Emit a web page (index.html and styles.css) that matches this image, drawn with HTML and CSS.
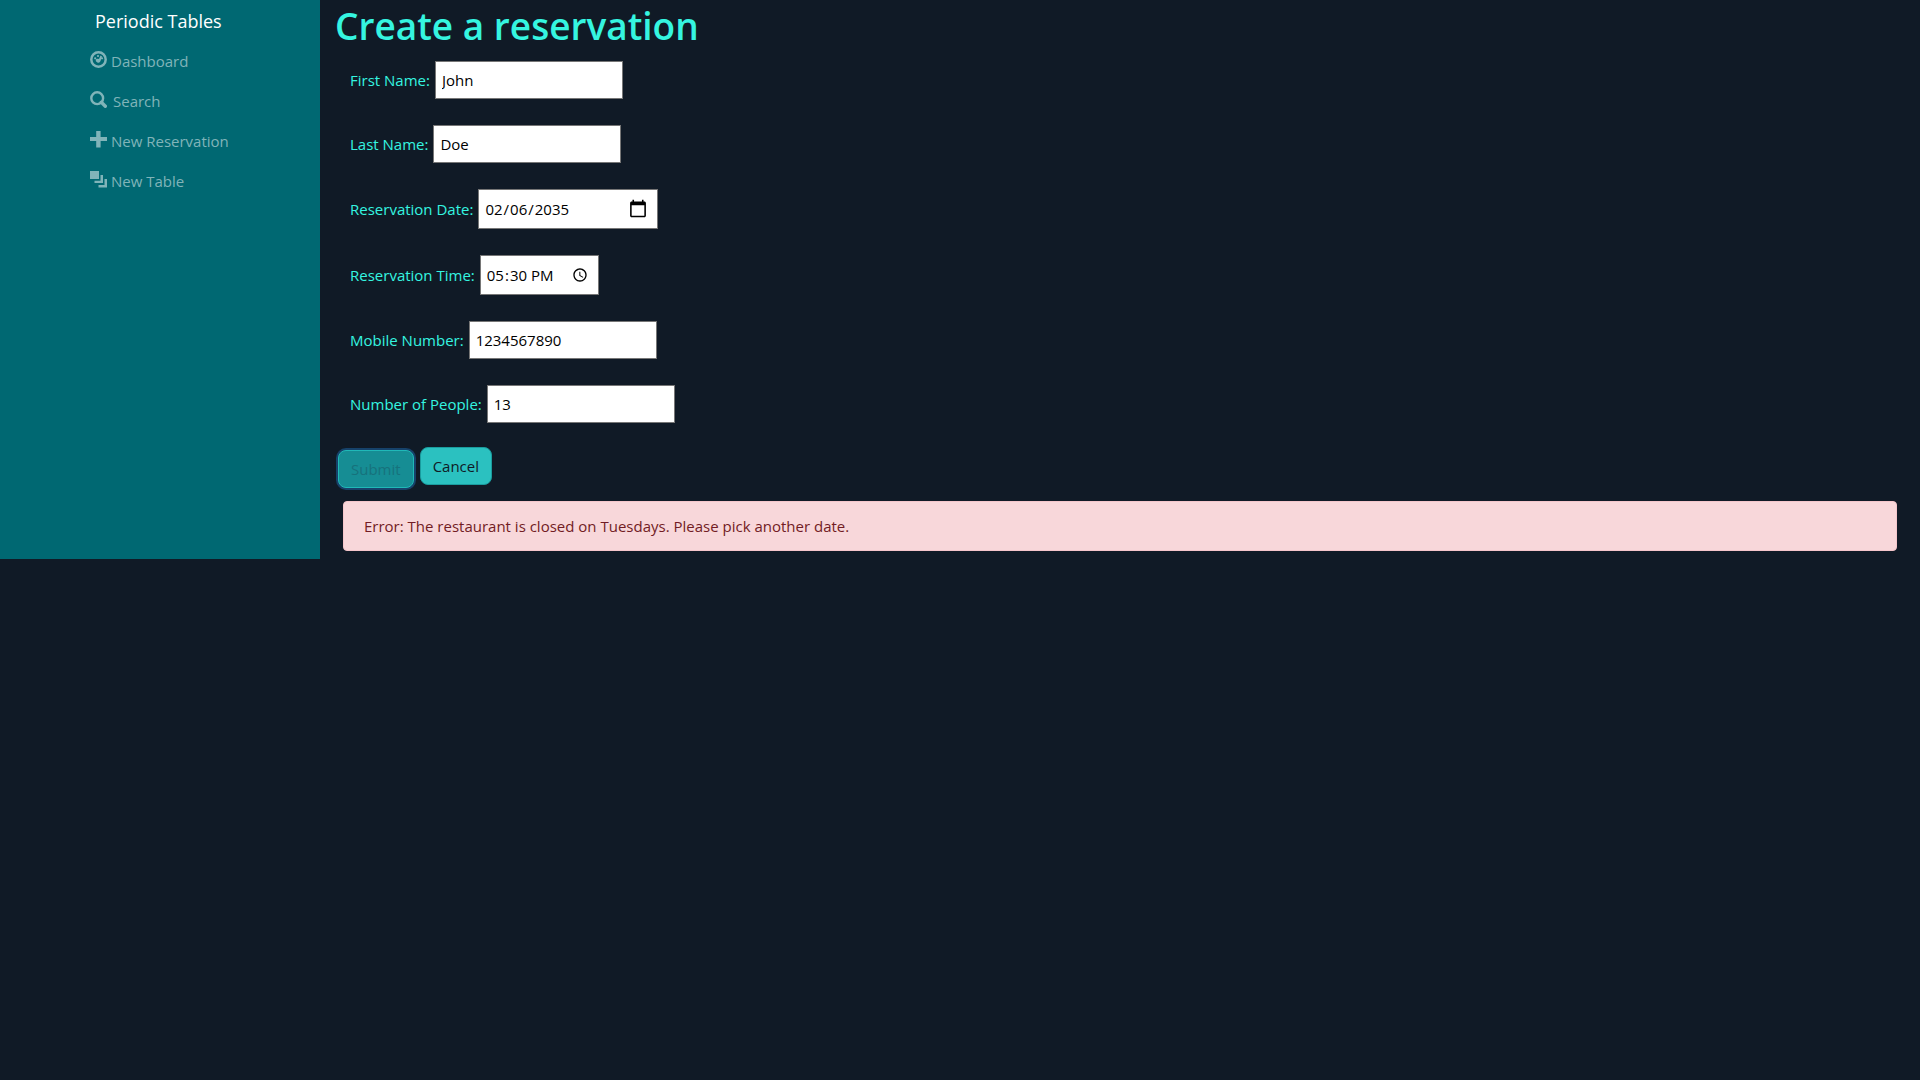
FILE: index.html
```html
<!DOCTYPE html>
<html lang="en">
<head>
<meta charset="utf-8">
<title>Periodic Tables</title>
<link rel="stylesheet" href="styles.css">
</head>
<body>
<div class="layout">
  <nav class="sidebar">
    <div class="menu">
      <a class="brand" href="#">Periodic Tables</a>
      <a class="nav-link" href="#">
        <svg class="icon" viewBox="0 0 17 17"><circle cx="8.500" cy="8.500" r="7.200" fill="none" stroke="currentColor" stroke-width="2.500"/><circle cx="5.200" cy="7.300" r="1.100" fill="currentColor"/><circle cx="8" cy="5" r="1.100" fill="currentColor"/><circle cx="12" cy="7.300" r="1.100" fill="currentColor"/><path d="M10.500 4.500l1.500 1-1.500 4.500a2.400 2.400 0 1 1-4.500-1.700l1.700-.6 1.300.3z" fill="currentColor"/></svg>
        <span>Dashboard</span></a>
      <a class="nav-link nav-search" href="#">
        <svg class="icon" viewBox="0 0 17 17"><circle cx="7.200" cy="7.200" r="5.900" fill="none" stroke="currentColor" stroke-width="2.400"/><path d="M11.300 11.300l4 4" stroke="currentColor" stroke-width="3.400" stroke-linecap="round"/></svg>
        <span>Search</span></a>
      <a class="nav-link" href="#">
        <svg class="icon" viewBox="0 0 17 17"><path d="M6.200 0h4.400v6h6.400v4h-6.400v6.500H6.200V10H0V6h6.200z" fill="currentColor"/></svg>
        <span>New Reservation</span></a>
      <a class="nav-link" href="#">
        <svg class="icon" viewBox="0 0 17 17"><path d="M0 0h9v8H0zM10.500 4H13v8H4.500V9.700h6zM14.500 8H17v8.500H8.500V14h6z" fill="currentColor"/></svg>
        <span>New Table</span></a>
    </div>
  </nav>
  <main class="content">
    <h1>Create a reservation</h1>
    <form>
      <div class="fields">
        <div class="field"><label for="first">First Name:</label><input id="first" type="text" value="John"></div>
        <div class="field"><label for="last">Last Name:</label><input id="last" type="text" value="Doe"></div>
        <div class="field"><label for="date">Reservation Date:</label><input class="date" id="date" type="date" value="2035-02-06"></div>
        <div class="field"><label for="time">Reservation Time:</label><input class="time" id="time" type="time" value="17:30"></div>
        <div class="field"><label for="mobile">Mobile Number:</label><input id="mobile" type="tel" value="1234567890"></div>
        <div class="field"><label for="people">Number of People:</label><input id="people" type="number" value="13"></div>
      </div>
      <div class="actions">
        <button class="btn submit" type="submit" disabled>Submit</button>
        <button class="btn" type="button">Cancel</button>
      </div>
    </form>
    <div class="alert" role="alert">Error: The restaurant is closed on Tuesdays. Please pick another date.</div>
  </main>
</div>
</body>
</html>
```
FILE: styles.css
```css
* { box-sizing: border-box; }
body {
  margin: 0;
  background: #101a26;
  font-family: "Open Sans", "Noto Sans", sans-serif;
  font-size: 15px;
  line-height: 24px;
}
.layout { display: grid; grid-template-columns: 1fr 5fr; }
.sidebar {
  display: flex;
  justify-content: center;
  background: #006872;
}
.menu { display: flex; flex-direction: column; width: 140px; }
.brand {
  padding: 6px 5px 5px;
  color: #fff;
  font-size: 18px;
  line-height: 30px;
  text-decoration: none;
  white-space: nowrap;
}
.nav-link {
  display: flex;
  align-items: center;
  gap: 4px;
  height: 40px;
  color: #80b4b9;
  text-decoration: none;
  white-space: nowrap;
}
.nav-search { gap: 6px; }
.icon { width: 17px; height: 17px; flex: none; margin-bottom: 3px; }
.content { padding: 0 23px 8px 15px; }
h1 {
  margin: 0;
  color: #35f5e0;
  font-size: 37px;
  font-weight: 600;
  line-height: 52px;
}
.fields {
  display: flex;
  flex-direction: column;
  gap: 26px;
  padding: 9px 15px 24px;
}
.field { display: flex; align-items: center; gap: 5px; color: #35f5e0; }
input {
  width: 188px;
  height: 38px;
  padding: 1px 6px;
  border: 1px solid #767676;
  background: #fff;
  color: #000;
  font: inherit;
}
.date, .time { height: 40px; padding: 1px 7px 1px 5px; }
.date { width: 180px; }
.time { width: 119px; }
.date::-webkit-calendar-picker-indicator { width: 20px; height: 20px; background-size: contain; }
input[type="number"] { appearance: textfield; }
.actions { display: flex; gap: 6px; padding-left: 3px; }
.btn {
  height: 38px;
  padding: 0 12px;
  border: 1px solid #1a9c9e;
  border-radius: 8px;
  background: #2bc1c0;
  color: #101a26;
  font: inherit;
}
.submit {
  margin-top: 3px;
  border-color: #20b8b8;
  background: #168d94;
  box-shadow: 0 0 0 2px #16426a;
  color: #16727c;
}
.alert {
  margin: 13px 0 0 8px;
  padding: 12px 20px;
  border: 1px solid #f5c6cb;
  border-radius: 4px;
  background: #f8d7da;
  color: #721c24;
}
```
